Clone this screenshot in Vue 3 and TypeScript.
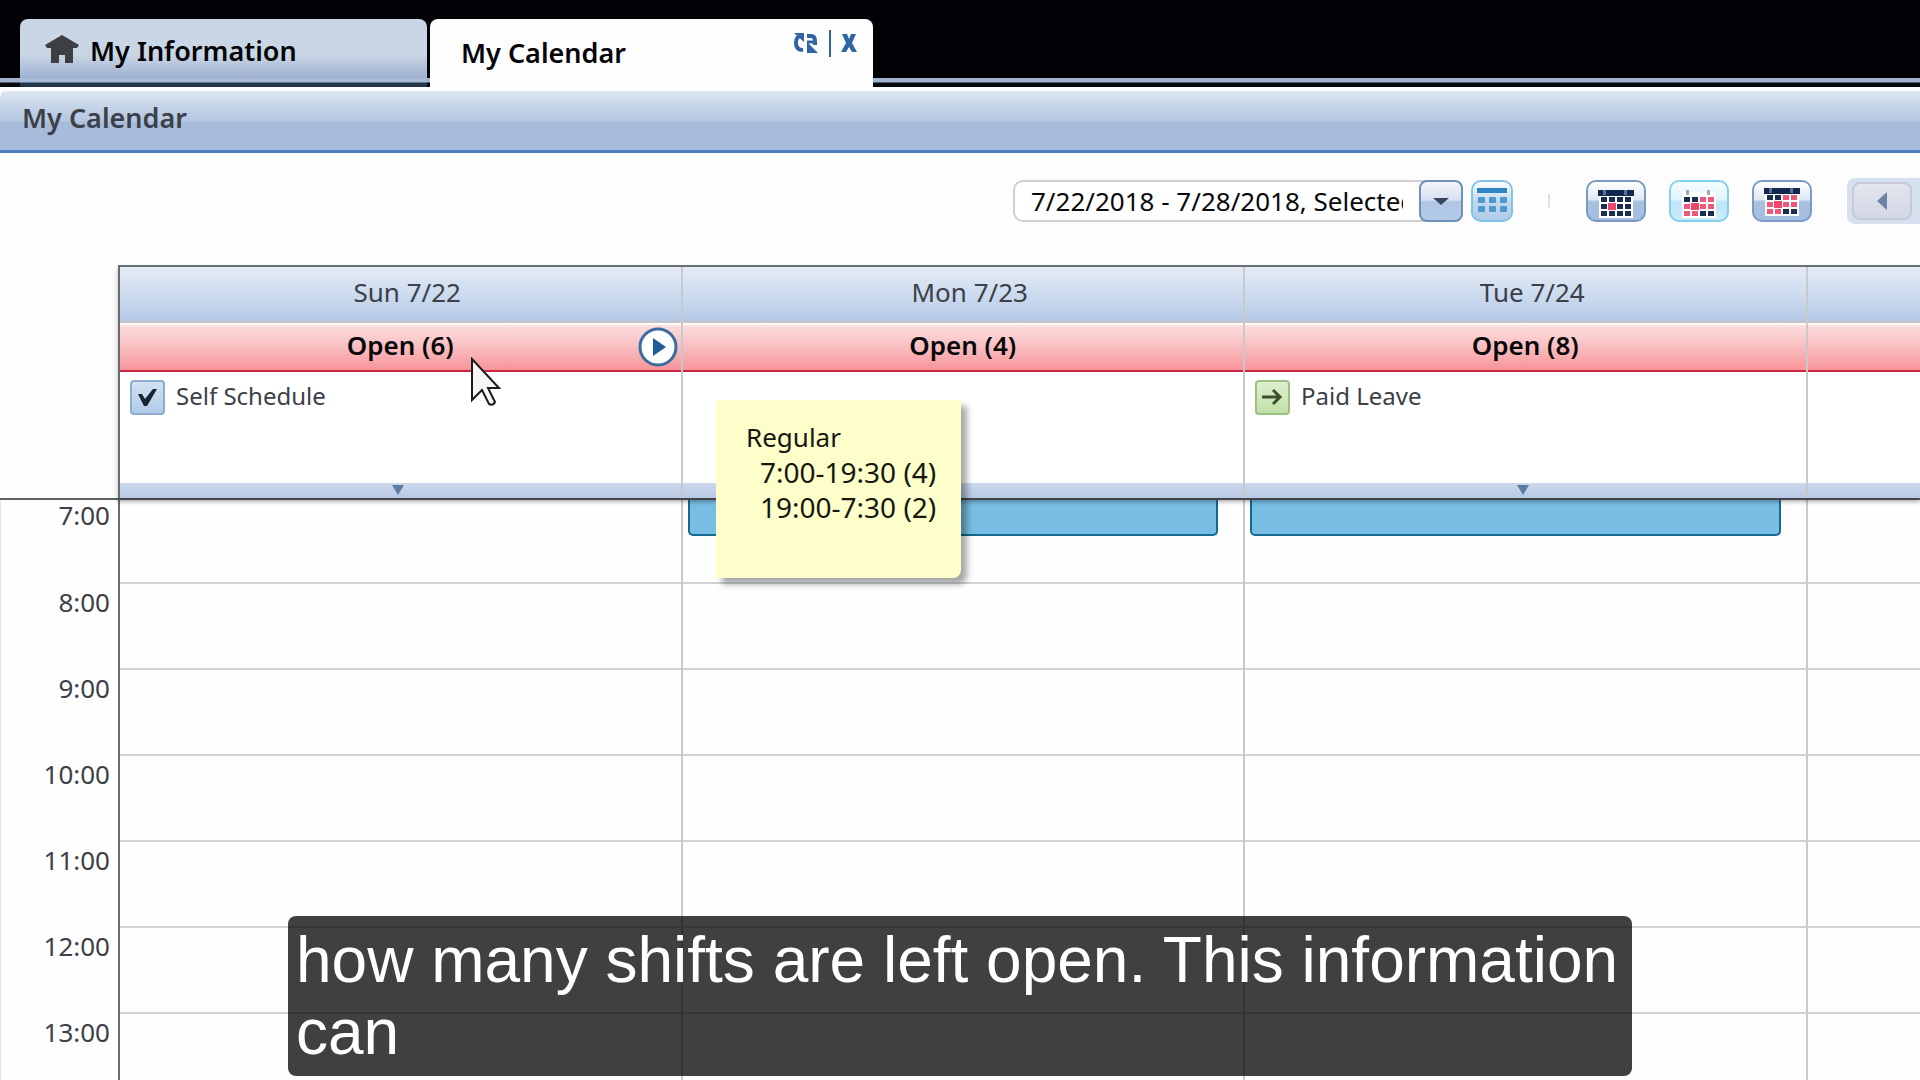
<script setup lang="ts">
interface Day {
  label: string
  open: string
  note?: string
  kind?: 'check' | 'arrow'
  more?: boolean
  play?: boolean
  shift?: boolean
}

const days: Day[] = [
  { label: 'Sun 7/22', open: 'Open (6)', note: 'Self Schedule', kind: 'check', more: true, play: true },
  { label: 'Mon 7/23', open: 'Open (4)', shift: true },
  { label: 'Tue 7/24', open: 'Open (8)', note: 'Paid Leave', kind: 'arrow', more: true, shift: true },
  { label: '', open: '' },
]

const hours: string[] = ['7:00', '8:00', '9:00', '10:00', '11:00', '12:00', '13:00']

interface View {
  name: string
  active: boolean
  bar: boolean
  top: number
  red: number[]
}

// Each glyph is a 4 x 3 block of days; `red` lists the highlighted ones.
const views: View[] = [
  { name: 'Day view', active: false, bar: true, top: 17, red: [5] },
  { name: 'Week view', active: true, bar: false, top: 17, red: [2, 3, 4, 5, 6, 7, 8, 9] },
  { name: 'Month view', active: false, bar: true, top: 15, red: [2, 3, 4, 5, 6, 7, 8, 9] },
]
</script>

<template>
  <div class="app">
    <nav class="tabs">
      <button class="tab idle" type="button">
        <svg class="home" width="36" height="30" viewBox="0 0 36 30" aria-hidden="true">
          <path d="M18 1 L35 11 L33 14 H29 V29 H21 V21 H15 V29 H7 V14 H3 L1 11 Z" fill="#3d3f42" />
        </svg>
        <span>My Information</span>
      </button>
      <div class="tab current">
        <span>My Calendar</span>
        <div class="tab-tools">
          <button type="button" aria-label="Refresh">
            <svg width="26" height="22" viewBox="0 0 26 22" fill="none" stroke="#2f65a0" stroke-width="4">
              <path d="M9 4 C4 4 3 7 3 11 C3 15 5 18 10 18" />
              <path d="M14 4 H18 Q22 4 22 9 V13" />
              <path d="M1 1 H11 V10 Z" fill="#2f65a0" stroke="none" />
              <path d="M14 10 L25 21 H14 Z" fill="#2f65a0" stroke="none" />
              <path d="M14 10 H22" stroke-width="3" />
            </svg>
          </button>
          <i class="bar"></i>
          <button type="button" aria-label="Close">
            <svg width="16" height="18" viewBox="0 0 16 18">
              <path d="M1 0 H6 L8 5 L10 0 H15 L11 9 L16 18 H11 L8 13 L5 18 H0 L5 9 Z" fill="#2f65a0" />
            </svg>
          </button>
        </div>
      </div>
    </nav>

    <header class="title"><h1>My Calendar</h1></header>

    <div class="toolbar">
      <div class="range">
        <input type="text" aria-label="Date range" value="7/22/2018 - 7/28/2018, Selected Range" />
        <button class="drop" type="button" aria-label="Choose range">
          <svg width="16" height="7" viewBox="0 0 16 7"><path d="M0 0 H16 L8 7 Z" fill="#35475f" /></svg>
        </button>
      </div>
      <button class="picker" type="button" aria-label="Open date picker">
        <svg width="32" height="26" viewBox="0 0 32 26">
          <rect x="1" y="0" width="30" height="5" fill="#2f84c4" />
          <g fill="#4f97cf">
            <template v-for="r in 2" :key="r">
              <rect v-for="c in 3" :key="c" :x="c * 11 - 9" :y="r * 9" width="7" height="6" rx="1" />
            </template>
          </g>
        </svg>
      </button>
      <i class="divider"></i>
      <div class="views">
        <button
          v-for="v in views"
          :key="v.name"
          type="button"
          class="view"
          :class="{ active: v.active }"
          :aria-label="v.name"
        >
          <svg width="56" height="38" viewBox="0 0 56 38">
            <rect x="11" :y="v.top - 7" width="34" height="26" fill="#ffffff" />
            <rect v-if="v.bar" x="10" :y="v.top - 9" width="36" height="6" fill="#12284f" />
            <g :fill="v.bar ? '#5c7196' : '#a2a6ae'">
              <rect x="15" :y="v.top - 9" width="3" height="5" />
              <rect x="36" :y="v.top - 9" width="3" height="5" />
            </g>
            <rect
              v-for="n in 12"
              :key="n"
              :x="13 + ((n - 1) % 4) * 8"
              :y="v.top - 2 + Math.floor((n - 1) / 4) * 7"
              width="6"
              height="5"
              :fill="v.red.includes(n - 1) ? '#f0587a' : '#1a2c50'"
            />
            <rect x="20" :y="v.top + 4" width="8" height="7" fill="#f0486a" />
          </svg>
        </button>
      </div>
      <div class="pager">
        <button type="button" aria-label="Previous">
          <svg width="10" height="18" viewBox="0 0 10 18"><path d="M10 0 V18 L0 9 Z" fill="#6d84a6" /></svg>
        </button>
      </div>
    </div>

    <main class="calendar">
      <section class="head">
        <div class="gutter"></div>
        <div class="cols bordered">
          <div v-for="(d, i) in days" :key="i" class="day">
            <div class="date">{{ d.label }}</div>
            <div class="open">
              <strong>{{ d.open }}</strong>
              <button v-if="d.play" class="play" type="button" aria-label="Show open shifts">
                <svg width="40" height="40" viewBox="0 0 40 40">
                  <circle cx="20" cy="20" r="18" fill="#fff" stroke="#3a6ca3" stroke-width="3" />
                  <path d="M15 11 L28 20 L15 29 Z" fill="#1f5c9c" />
                </svg>
              </button>
            </div>
            <div class="notes">
              <div v-if="d.note" class="note">
                <svg class="badge" :class="d.kind" width="31" height="31" viewBox="0 0 31 31" aria-hidden="true">
                  <path v-if="d.kind === 'check'" d="M6 12 L10 12 L13 17 L21 7 L25 7 L15 24 L12 24 Z" fill="#182334" />
                  <path v-else d="M5 15 H23 M16 8 L23 15 L16 22" fill="none" stroke="#3c5030" stroke-width="3" />
                </svg>
                <span>{{ d.note }}</span>
              </div>
            </div>
            <div class="more">
              <svg v-if="d.more" width="12" height="10" viewBox="0 0 12 10"><path d="M0 0 H12 L6 10 Z" fill="#5f7ca3" /></svg>
            </div>
          </div>
        </div>
      </section>

      <section class="body">
        <div class="gutter times">
          <div v-for="h in hours" :key="h" class="hour">{{ h }}</div>
        </div>
        <div class="cols">
          <div v-for="(d, i) in days" :key="i" class="day">
            <div v-for="(h, k) in hours" :key="h" class="hour">
              <div v-if="d.shift && k === 0" class="shift"></div>
            </div>
          </div>
        </div>
      </section>
      <aside class="tip">
        <div>Regular</div>
        <div class="slot">7:00-19:30 (4)</div>
        <div class="slot">19:00-7:30 (2)</div>
      </aside>
      <svg class="cursor" width="32" height="52" viewBox="0 0 32 52" aria-hidden="true">
        <path d="M2 2 V43 L12 33 L19 47 Q23 49 25 45 L18 31 H29 Z" fill="#f6f6f6" stroke="#1b1b1f" stroke-width="2" />
      </svg>
    </main>

    <p class="caption">how many shifts are left open. This information can</p>
  </div>
</template>

<style>
body {
  margin: 0;
  background: #fdfdfd;
}
</style>

<style scoped>
.app {
  position: relative;
  height: 100vh;
  overflow: hidden;
  display: flex;
  flex-direction: column;
  background: #fdfdfe;
  color: #3c4048;
  font: 26px/36px 'Noto Sans', 'Open Sans', sans-serif;
}
button {
  border: 0;
  padding: 0;
  margin: 0;
  background: none;
  font: inherit;
  color: inherit;
  box-sizing: border-box;
  display: flex;
  align-items: center;
  justify-content: center;
}
svg {
  display: block;
  flex: none;
}

.tabs {
  flex: none;
  display: flex;
  gap: 3px;
  height: 68px;
  padding: 19px 0 0 20px;
  background: linear-gradient(#010205 78px, #a0b4cf 78px 82px, #060a10 83px);
}
.tab {
  box-sizing: border-box;
  display: flex;
  color: #050507;
  font-size: 27px;
  font-weight: 600;
  border-radius: 8px 8px 0 0;
}
.tab.idle {
  width: 407px;
  justify-content: flex-start;
  align-items: flex-start;
  padding: 14px 0 0 24px;
  gap: 10px;
  background: linear-gradient(#c9d6e5 36px, #9fb0d2 59px, #a8bcd8 59px 63px, #22364a 64px);
}
.tab.current {
  width: 443px;
  justify-content: space-between;
  padding: 16px 16px 0 31px;
  background: #fdfdfe;
}
.home {
  margin-top: 1px;
}
.tab-tools {
  display: flex;
  align-items: center;
  height: 20px;
  gap: 10px;
  margin-top: -2px;
}
.bar {
  width: 2px;
  height: 27px;
  background: #2f65a0;
}

.title {
  flex: none;
  box-sizing: border-box;
  height: 66px;
  padding: 13px 22px 0;
  border-bottom: 3px solid #4a7dc0;
  border-radius: 12px 0 0 0;
  background: linear-gradient(#ffffff 3px, #dbe4ed 5px, #c4d3e7 20px, #b6c7e1 34px, #a7bcda 36px);
}
.title h1 {
  margin: 0;
  font-size: 27px;
  font-weight: 600;
}

.toolbar {
  flex: none;
  display: flex;
  align-items: center;
  justify-content: flex-end;
  height: 46px;
  padding: 25px 0 41px;
}
.range {
  display: flex;
  box-sizing: border-box;
  width: 450px;
  height: 42px;
  border: 2px solid #cfcfd2;
  border-radius: 10px;
  background: #fff;
}
.range input {
  flex: 1;
  min-width: 0;
  margin: 0 18px 0 16px;
  padding: 0;
  border: 0;
  background: none;
  color: #08080c;
  font: inherit;
}
.drop {
  width: 44px;
  height: 42px;
  margin: -2px;
  border: 2px solid #6f90b5;
  border-radius: 8px;
  background: linear-gradient(#f3f6fc, #d5e0f1 48%, #aec5e4 52%, #b4cae8);
}
.picker {
  width: 42px;
  height: 42px;
  margin-left: 8px;
  border: 2px solid #7fc3ea;
  border-radius: 10px;
  background: linear-gradient(#ffffff, #c2d8ef 50%, #b2cbe9);
}
.divider {
  width: 2px;
  height: 14px;
  margin: 0 36px 0 35px;
  background: #e0e0e4;
}
.views {
  display: flex;
  gap: 23px;
}
.view {
  width: 60px;
  height: 42px;
  border: 2px solid #7b9bc5;
  border-radius: 10px;
  background: linear-gradient(#ffffff, #dfe8f4 46%, #a9c0e0 52%, #a4bde0);
}
.view.active {
  border-color: #83cfee;
  background: linear-gradient(#f4fcff, #e0f4fc 46%, #bfe5f7 52%, #cdeafa);
}
.pager {
  box-sizing: border-box;
  width: 73px;
  height: 46px;
  margin-left: 35px;
  padding: 4px 0 4px 5px;
  border-radius: 8px 0 0 8px;
  background: #d6e0ef;
}
.pager button {
  width: 60px;
  height: 38px;
  border: 2px solid #c6cad8;
  border-radius: 8px;
  background: linear-gradient(#e2e5ee, #d3d7e4);
}

.calendar {
  position: relative;
  flex: 1;
}
.head,
.body {
  display: flex;
}
.gutter {
  flex: none;
  box-sizing: border-box;
  width: 118px;
}
.cols {
  flex: 1;
  display: grid;
  grid-template-columns: repeat(3, 5fr) 1fr;
  border-left: 2px solid #6a6c70;
}
.cols.bordered {
  border-top: 2px solid #6a7078;
}
.day {
  min-width: 0;
  border-right: 2px solid #c9c9cc;
}
.day:last-child {
  border-right: 0;
}
.head {
  position: relative;
  border-bottom: 2px solid #5d6066;
}
.head .cols {
  box-shadow: 0 4px 4px rgba(0, 0, 0, 0.3);
}
.date {
  box-sizing: border-box;
  height: 56px;
  padding: 7px 0 0 14px;
  text-align: center;
  border-bottom: 2px solid #c4c4c8;
  background: linear-gradient(#e4ebf5, #cddcef 50%, #b5c9e6);
}
.open {
  position: relative;
  box-sizing: border-box;
  height: 49px;
  padding-top: 4px;
  border-bottom: 2px solid #cb2540;
  text-align: center;
  color: #08080a;
  background: linear-gradient(#ffffff 1px, #fbdcdc 3px, #f9bfc1 50%, #f79499);
}
.open strong {
  font-weight: 600;
}
.play {
  position: absolute;
  top: 4px;
  right: 3px;
}
.notes {
  height: 111px;
  background: #fff;
}
.note {
  display: flex;
  align-items: flex-start;
  gap: 11px;
  padding: 6px 0 0 10px;
}
.note span {
  font-size: 24px;
}
.badge {
  margin-top: 2px;
  border: 2px solid #8eaccf;
  border-radius: 4px;
  background: linear-gradient(#d3e1f3, #b2cae8);
}
.badge.arrow {
  border-color: #9dc283;
  background: linear-gradient(#def0cf, #c1e0a8);
}
.more {
  display: flex;
  justify-content: center;
  box-sizing: border-box;
  height: 15px;
  padding: 2px 4px 0 0;
  background: linear-gradient(#ccd9ec, #b8c9e5);
}
.body {
  background: #fefefe;
}
.hour {
  box-sizing: border-box;
  height: 86px;
  border-bottom: 2px solid #d2d2d4;
}
.hour:first-child {
  height: 84px;
}
.times {
  border-left: 1px solid #e4e4e8;
  padding-right: 8px;
  text-align: right;
}
.times .hour {
  border-color: transparent;
}
.times .hour:first-child {
  line-height: 30px;
}
.shift {
  box-sizing: border-box;
  height: 36px;
  margin: 0 25px 0 5px;
  border: 2px solid #136a8e;
  border-top: 0;
  border-radius: 0 0 5px 5px;
  background: #78bee4;
}

.tip {
  position: absolute;
  left: 716px;
  top: 135px;
  box-sizing: border-box;
  width: 245px;
  height: 178px;
  padding: 20px 0 0 30px;
  line-height: 35px;
  color: #16180f;
  background: #fefecb;
  border-radius: 2px 2px 8px 2px;
  box-shadow: 6px 6px 6px rgba(0, 0, 0, 0.35);
  white-space: nowrap;
}
.slot {
  padding-left: 14px;
  font-size: 28px;
}
.cursor {
  position: absolute;
  left: 470px;
  top: 92px;
}
.caption {
  position: absolute;
  left: 15%;
  right: 15%;
  bottom: 4px;
  margin: 0;
  padding: 8px;
  color: #fff;
  background: rgba(0, 0, 0, 0.75);
  border-radius: 8px;
  font: 64px/72px 'Liberation Sans', Arial, sans-serif;
}
</style>
